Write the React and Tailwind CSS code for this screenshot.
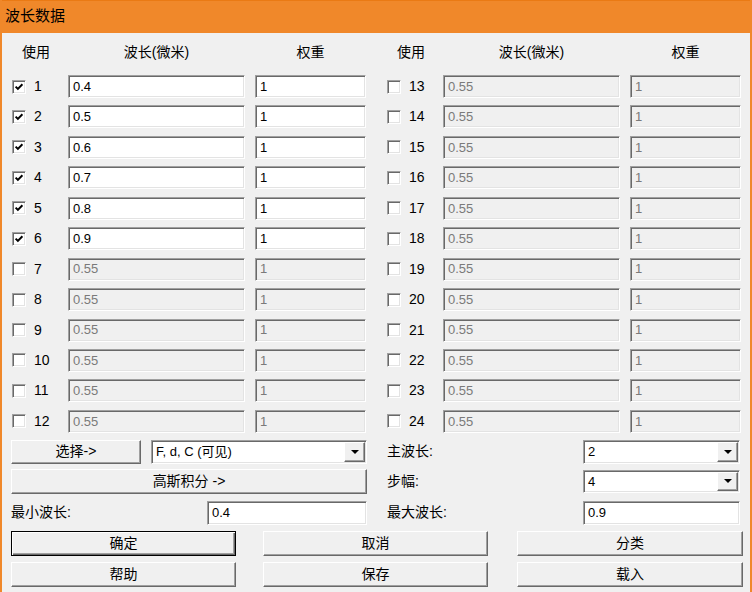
import React from "react";

const font = "font-['Liberation_Sans','Noto_Sans_CJK_SC',sans-serif]";

const sunken =
  "border border-t-[#a0a0a0] border-l-[#a0a0a0] border-r-white border-b-white shadow-[inset_1px_1px_0_#696969,inset_-1px_-1px_0_#e3e3e3]";

const raised =
  "border border-t-white border-l-white border-r-[#696969] border-b-[#696969] shadow-[inset_-1px_-1px_0_#a0a0a0]";

const raisedDefault =
  "border border-black shadow-[inset_1px_1px_0_#ffffff,inset_-1px_-1px_0_#696969,inset_-2px_-2px_0_#a0a0a0]";

const leftRows = [
  { n: 1, on: true, v: "0.4" },
  { n: 2, on: true, v: "0.5" },
  { n: 3, on: true, v: "0.6" },
  { n: 4, on: true, v: "0.7" },
  { n: 5, on: true, v: "0.8" },
  { n: 6, on: true, v: "0.9" },
  ...[7, 8, 9, 10, 11, 12].map((n) => ({ n, on: false, v: "0.55" })),
];

const rightRows = Array.from({ length: 12 }, (_, i) => ({ n: 13 + i, on: false, v: "0.55" }));

function Check({ on }) {
  return (
    <div className={`flex h-[14px] w-[14px] shrink-0 items-center justify-center bg-white ${sunken}`}>
      {on && (
        <svg width="10" height="10" viewBox="0 0 10 10">
          <path d="M1.6 4.6 L3.9 6.9 L8.4 2.3" fill="none" stroke="#000" strokeWidth="2" />
        </svg>
      )}
    </div>
  );
}

function Field({ value, disabled, className = "" }) {
  return (
    <div
      className={`flex h-full items-center pl-[4px] text-[13px] ${sunken} ${
        disabled ? "bg-[#f0f0f0] text-[#7a7a7a]" : "bg-white text-black"
      } ${className}`}
    >
      {value}
    </div>
  );
}

function Combo({ value, className = "" }) {
  return (
    <div className={`flex h-full items-stretch bg-white p-[1px] ${sunken} ${className}`}>
      <div className="flex flex-1 items-center pl-[3px] text-[13px]">{value}</div>
      <div className={`flex w-[21px] items-center justify-center bg-[#f0f0f0] ${raised}`}>
        <svg width="8" height="4" viewBox="0 0 8 4">
          <polygon points="0,0 8,0 4,4" fill="#000" />
        </svg>
      </div>
    </div>
  );
}

function Btn({ children, primary, className = "" }) {
  return (
    <div
      className={`flex items-center justify-center bg-[#f0f0f0] text-[14px] ${
        primary ? raisedDefault : raised
      } ${className}`}
    >
      {children}
    </div>
  );
}

function Half({ rows, className = "" }) {
  return (
    <div className={`flex flex-col ${className}`}>
      <div className="flex h-[42px] pt-[10px] text-[14px] leading-[18px]">
        <div className="w-[48px] text-center">使用</div>
        <div className="ml-[8px] w-[177px] text-center">波长(微米)</div>
        <div className="ml-[10px] w-[111px] text-center">权重</div>
      </div>
      <div className="flex flex-col gap-[7.45px]">
        {rows.map((r) => (
          <div key={r.n} className="flex h-[23px] items-center">
            <div className="flex w-[56px] items-center">
              <Check on={r.on} />
              <span className="ml-[8px] text-[14px]">{r.n}</span>
            </div>
            <Field value={r.v} disabled={!r.on} className="w-[177px]" />
            <Field value="1" disabled={!r.on} className="ml-[10px] w-[111px]" />
          </div>
        ))}
      </div>
    </div>
  );
}

export default function App() {
  return (
    <div className={`flex h-[592px] w-[752px] flex-col overflow-hidden border-x-2 border-[#f0882a] bg-[#f0f0f0] text-black ${font}`}>
      <div className="flex h-[33px] shrink-0 items-center border-t border-[#ea7a14] bg-[#f0882a] pl-[3px] pb-[2px] text-[15px]">
        波长数据
      </div>

      <div className="flex">
        <Half rows={leftRows} className="w-[373px] pl-[10px]" />
        <Half rows={rightRows} className="pl-[12px]" />
      </div>

      <div className="mt-[7px] flex pl-[9px] text-[14px]">
        <div className="flex w-[356px] flex-col">
          <div className="flex h-[24px]">
            <Btn className="w-[130px]">选择-&gt;</Btn>
            <Combo value="F, d, C (可见)" className="ml-[10px] w-[216px]" />
          </div>
          <Btn className="mt-[5px] h-[25px] w-full">高斯积分 -&gt;</Btn>
          <div className="mt-[7px] flex h-[24px] items-center">
            <span>最小波长:</span>
            <Field value="0.4" className="ml-auto w-[160px]" />
          </div>
        </div>
        <div className="ml-[20px] flex w-[353px] flex-col">
          <div className="flex h-[24px] items-center">
            <span>主波长:</span>
            <Combo value="2" className="ml-auto w-[157px]" />
          </div>
          <div className="mt-[6px] flex h-[23px] items-center">
            <span>步幅:</span>
            <Combo value="4" className="ml-auto w-[157px]" />
          </div>
          <div className="mt-[8px] flex h-[24px] items-center">
            <span>最大波长:</span>
            <Field value="0.9" className="ml-auto w-[157px]" />
          </div>
        </div>
      </div>

      <div className="mt-[6px] flex h-[25px] pl-[9px]">
        <Btn primary className="w-[225px]">确定</Btn>
        <Btn className="ml-[27px] w-[225px]">取消</Btn>
        <Btn className="ml-[29px] w-[226px]">分类</Btn>
      </div>
      <div className="mt-[6px] flex h-[25px] pl-[9px]">
        <Btn className="w-[225px]">帮助</Btn>
        <Btn className="ml-[27px] w-[225px]">保存</Btn>
        <Btn className="ml-[29px] w-[226px]">载入</Btn>
      </div>
    </div>
  );
}
